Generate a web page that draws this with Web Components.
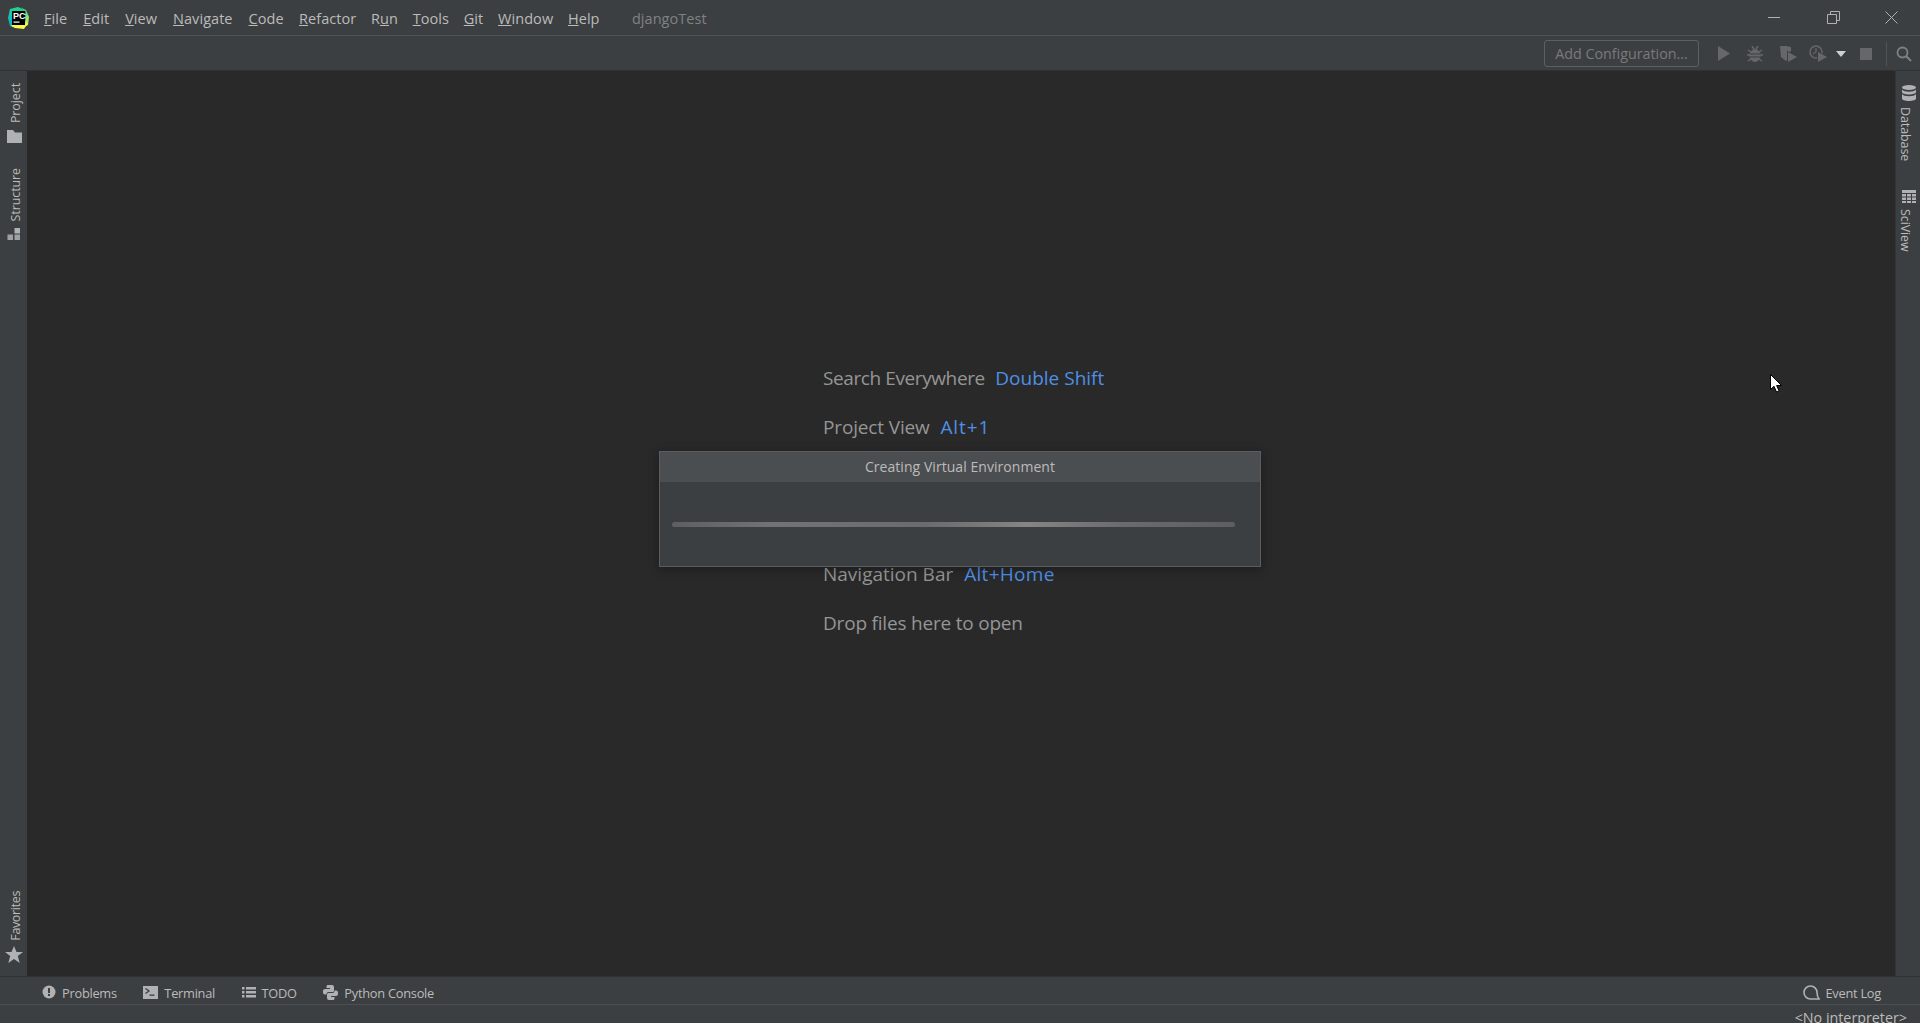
<!DOCTYPE html>
<html><head><meta charset="utf-8"><title>djangoTest</title>
<style>
html,body{margin:0;height:100%;overflow:hidden;background:#3c3f41}
</style></head><body>
<ide-app></ide-app>
<script>
const FONT='"Open Sans","Noto Sans",sans-serif';
function def(name,html,init){
  customElements.define(name,class extends HTMLElement{
    constructor(){super();const r=this.attachShadow({mode:'open'});r.innerHTML=html;}
    connectedCallback(){ if(init) init.call(this,this.shadowRoot); }
  });
}
const ICON={
 folder:'<svg width="15" height="13" viewBox="0 0 15 13"><path fill="#afb1b3" d="M0 0h6l2 2.5h7V13H0z"/></svg>',
 structure:'<svg width="14" height="12" viewBox="0 0 14 12"><g fill="#afb1b3"><rect x="7.5" y="0" width="5.5" height="5.5"/><rect x="0.5" y="6.5" width="5.5" height="5.5" opacity=".85"/><rect x="7.5" y="6.5" width="5.5" height="5.5" opacity=".85"/></g></svg>',
 star:'<svg width="18" height="17" viewBox="0 0 18 17"><path fill="#afb1b3" d="M9 0l2.5 6H18l-5.2 4.1L14.7 17 9 13l-5.7 4 1.9-6.9L0 6h6.5z"/></svg>',
 db:'<svg width="14" height="16" viewBox="0 0 14 16"><g fill="#afb1b3"><ellipse cx="7" cy="2.5" rx="7" ry="2.5"/><path d="M0 4.5c1 1.6 3.6 2.2 7 2.2s6-.6 7-2.2v2.6c0 1.4-3 2.5-7 2.5S0 8.500 0 7.100z"/><path d="M0 9c1 1.600 3.600 2.200 7 2.200S13 10.600 14 9v4.500C14 15 11 16 7 16S0 15 0 13.500z"/></g></svg>',
 sci:'<svg width="14" height="13" viewBox="0 0 14 13"><g fill="#afb1b3"><path d="M0 0h14v3H0zM0 4h4v2.500H0zM5 4h4v2.500H5zM10 4h4v2.500h-4zM0 7.500h4V10H0zM5 7.500h4V10H5zM10 7.500h4V10h-4zM0 11h4v2H0zM5 11h4v2H5zM10 11h4v2h-4z"/></g></svg>',
 problems:'<svg width="14" height="14" viewBox="0 0 14 14"><circle cx="7" cy="7" r="6.500" fill="#afb1b3"/><rect x="6" y="3" width="2" height="5" fill="#3c3f41"/><rect x="6" y="9" width="2" height="2" fill="#3c3f41"/></svg>',
 terminal:'<svg width="15" height="13" viewBox="0 0 15 13"><rect width="15" height="13" fill="#afb1b3"/><path d="M2.500 2.500l3.500 2.500-3.500 2.500" fill="none" stroke="#3c3f41" stroke-width="1.300"/><rect x="6.500" y="8.500" width="5" height="1.300" fill="#3c3f41"/></svg>',
 todo:'<svg width="14" height="11" viewBox="0 0 14 11"><g fill="#afb1b3"><rect y="0" width="2.500" height="2.500"/><rect y="4" width="2.500" height="2.500"/><rect y="8" width="2.500" height="2.500"/><rect x="4" y="0" width="10" height="2.500"/><rect x="4" y="4" width="10" height="2.500"/><rect x="4" y="8" width="10" height="2.500"/></g></svg>',
 python:'<svg width="15" height="15" viewBox="0 0 15 15"><g fill="#afb1b3"><path d="M5 0h4a2 2 0 0 1 2 2v3.500a1.500 1.500 0 0 1-1.500 1.500h-4A2 2 0 0 0 3.500 9v.5H2A2 2 0 0 1 0 7.500V6a2 2 0 0 1 2-2h5V3H3.500V1.500C3.500 .6 4 0 5 0z"/><path d="M10 15H6a2 2 0 0 1-2-2V9.500A1.500 1.500 0 0 1 5.500 8h4a2 2 0 0 0 2-2v-.5H13a2 2 0 0 1 2 2V9a2 2 0 0 1-2 2H8v1h3.500v1.500c0 .9-.5 1.500-1.500 1.500z"/></g></svg>',
 event:'<svg width="17" height="15" viewBox="0 0 17 15"><path fill="none" stroke="#afb1b3" stroke-width="1.600" d="M16 14H7.500a6.500 6.500 0 1 1 6.500-6.500c0 2.500.6 4.500 2 6.500z"/></svg>'
};
const SVGBLOCK='svg{display:block}span[slot]{display:block}';
def('ide-logo',`<style>:host{display:block;width:21px;height:22px}svg{display:block}text{font:700 9px "Liberation Sans",sans-serif;fill:#fff}</style>
<svg width="21" height="22" viewBox="0 0 21 22"><defs><linearGradient id="g1" x1="0" y1="0" x2="0" y2="1"><stop offset="0" stop-color="#21d789"/><stop offset="1" stop-color="#07a8d8"/></linearGradient><linearGradient id="g2" x1="0" y1="0" x2="0" y2="1"><stop offset="0" stop-color="#21d789"/><stop offset="1" stop-color="#fcf84a"/></linearGradient></defs>
<path fill="url(#g1)" d="M2 2l8-2 6 3 3 6-2 9-8 3-7-2-2-8z"/><path fill="url(#g2)" d="M12 0l6 3 3 7-1 8-6 3 4-8V5z"/><path fill="#fcf84a" d="M3 19l4 2 9 1 4-6-4 1H5z"/><rect x="4" y="4" width="13" height="14" fill="#000"/><text x="5" y="12">PC</text><rect x="5.500" y="14.500" width="6" height="1.200" fill="#fff"/></svg>`);
def('win-controls',`<style>:host{display:flex;align-items:center;height:35px;padding-right:22px}svg{display:block}</style>
<svg width="12" height="2" viewBox="0 0 12 2"><rect width="12" height="1" fill="#afb1b3"/></svg>
<svg style="margin-left:47px" width="13" height="13" viewBox="0 0 13 13"><path fill="none" stroke="#afb1b3" d="M3.500 3V.5h9v9H10M.5 3.500h9v9h-9z"/></svg>
<svg style="margin-left:45px" width="13" height="13" viewBox="0 0 13 13"><path fill="none" stroke="#afb1b3" d="M.5.5l12 12M12.500.5l-12 12"/></svg>`);
def('menu-item',`<style>:host{display:block;font-size:14.5px;letter-spacing:.05px;color:#bbb;padding:1px 8px 0}</style><slot></slot>`);
def('ide-titlebar',`<style>:host{display:flex;align-items:center;height:35px;border-bottom:1px solid #515456;flex:none;font-family:${FONT}}
ide-logo{margin-left:8px;margin-right:7px}
.title{margin-left:25px;padding-top:1px;font-size:14.5px;letter-spacing:.05px;color:#7f8285}
win-controls{margin-left:auto}
nav{display:flex}
menu-item:nth-child(n+6){padding-left:7.4px;padding-right:7.4px}</style>
<ide-logo></ide-logo>
<nav>
<menu-item><u>F</u>ile</menu-item><menu-item><u>E</u>dit</menu-item><menu-item><u>V</u>iew</menu-item><menu-item><u>N</u>avigate</menu-item><menu-item><u>C</u>ode</menu-item><menu-item><u>R</u>efactor</menu-item><menu-item>R<u>u</u>n</menu-item><menu-item><u>T</u>ools</menu-item><menu-item><u>G</u>it</menu-item><menu-item><u>W</u>indow</menu-item><menu-item><u>H</u>elp</menu-item>
</nav><span class="title">djangoTest</span><win-controls></win-controls>`);
def('ide-toolbar',`<style>:host{display:flex;align-items:center;justify-content:flex-end;height:33px;padding-top:1px;flex:none;font-family:${FONT};border-bottom:1px solid #2f3132;padding-right:8px}
.cfg{box-sizing:border-box;width:155px;height:27px;border:1px solid #5e6060;border-radius:3px;font-size:14.300px;color:#787a7c;display:flex;align-items:center;justify-content:center;margin-right:19px}
.row{display:flex;align-items:center}
.sep{width:1px;height:24px;background:#515456;margin:0 9px 0 14px}
svg{display:block}</style>
<div class="cfg">Add Configuration...</div>
<div class="row">
<svg width="12" height="15" viewBox="0 0 12 15"><path fill="#656769" d="M0 0l12 7.500L0 15z"/></svg>
<svg style="margin-left:17px" width="16" height="16" viewBox="0 0 16 16"><g fill="#656769"><ellipse cx="8" cy="9.500" rx="5.500" ry="6.500"/><path d="M1 4l3 2M15 4l-3 2M0 9h3M16 9h-3M1 15l3-2M15 15l-3-2M5 0l2 3M11 0L9 3" stroke="#656769" stroke-width="1.500"/></g><path d="M3 8h10M3 11h10" stroke="#3c3f41"/></svg>
<svg style="margin-left:16px" width="18" height="17" viewBox="0 0 18 17"><path fill="#656769" d="M1 1h6l5 1v4l-3 2v6l-2 2-5-4z"/><path fill="#3c3f41" d="M8 5.500l10 6-10 6z"/><path fill="#656769" d="M9 7l9 5-9 5z"/></svg>
<svg style="margin-left:12px" width="18" height="17" viewBox="0 0 18 17"><circle cx="7" cy="7" r="6" fill="none" stroke="#656769" stroke-width="1.500"/><path d="M7 3v4l-3 2" fill="none" stroke="#656769" stroke-width="1.300"/><path fill="#3c3f41" d="M8 5.500l10 6-10 6z"/><path fill="#656769" d="M9 7l9 5-9 5z"/></svg>
<svg style="margin-left:9px" width="10" height="6" viewBox="0 0 10 6"><path fill="#cfd0d1" d="M0 0h10L5 6z"/></svg>
<svg style="margin-left:14px" width="12" height="12" viewBox="0 0 12 12"><rect width="12" height="12" fill="#656769"/></svg>
<div class="sep"></div>
<svg width="16" height="16" viewBox="0 0 16 16"><circle cx="6.500" cy="6.500" r="5" fill="none" stroke="#7f8284" stroke-width="1.800"/><path d="M10 10l5 5" stroke="#7f8284" stroke-width="2"/></svg>
</div>`);
def('stripe-button',`<style>:host{display:flex;flex-direction:column;align-items:center;font-size:12.500px;letter-spacing:var(--ls,-.1px);color:#bbb;line-height:16px}
.t{writing-mode:vertical-rl}
:host([side=left]) .t{transform:translateX(2px) rotate(180deg)}
:host([side=right]) .t{transform:translateX(-4px)}
.i{display:block}
:host([side=left]) .i{margin-top:var(--im,7px)}
:host([side=right]) .i{margin-bottom:6px}
:host([side=right]){flex-direction:column-reverse}
</style><span class="t"><slot></slot></span><span class="i"><slot name="icon"></slot></span>`);
def('left-stripe',`<style>${SVGBLOCK}:host{display:flex;flex-direction:column;width:27px;box-sizing:border-box;flex:none;font-family:${FONT};padding:12px 0 13px 1px;align-items:center}
.g{display:flex;flex-direction:column;gap:24.5px}
.end{margin-top:auto;--ls:-.35px;--im:5px}</style>
<div class="g"><stripe-button side="left"><span slot="icon">${ICON.folder}</span>Project</stripe-button>
<stripe-button side="left"><span slot="icon">${ICON.structure}</span>Structure</stripe-button></div>
<stripe-button class="end" side="left"><span slot="icon">${ICON.star}</span>Favorites</stripe-button>`);
def('right-stripe',`<style>${SVGBLOCK}:host{display:flex;flex-direction:column;width:25px;box-sizing:border-box;flex:none;font-family:${FONT};padding:14px 0 0 1px;align-items:center;gap:29px;border-left:1px solid #333536}</style>
<stripe-button side="right"><span slot="icon">${ICON.db}</span>Database</stripe-button>
<stripe-button side="right"><span slot="icon">${ICON.sci}</span>SciView</stripe-button>`);
def('hint-row',`<style>:host{display:block;height:49px;line-height:49px;font-size:19px;letter-spacing:var(--ls,-.15px);color:#959595;white-space:nowrap}
::slotted(b){font-weight:400;color:#4f8fe6;margin-left:6px;letter-spacing:var(--kls,0)}</style><slot></slot>`);
def('welcome-hints',`<style>:host{display:flex;flex-direction:column;font-family:${FONT};position:absolute;left:823px;top:354px}</style><slot></slot>`);
def('progress-dialog',`<style>:host{position:absolute;left:659px;top:451px;width:602px;height:116px;box-sizing:border-box;border:1px solid #5b5e60;background:#3c3f41;font-family:${FONT};box-shadow:0 2px 10px rgba(0,0,0,.35);display:flex;flex-direction:column}
.h{height:30px;line-height:30px;background:#4b4e51;color:#bbb;text-align:center;font-size:14px;letter-spacing:.05px;flex:none}
.b{padding:40px 25px 0 12px}
.p{height:5px;border-radius:3px;background:linear-gradient(90deg,#5d5f61 0,#727375 18%,#6a6b6d 45%,#858585 63%,#6a6b6d 80%,#5c5e60 100%)}</style>
<div class="h">Creating Virtual Environment</div><div class="b"><div class="p"></div></div>`);
def('mouse-cursor',`<style>:host{position:absolute;left:1770px;top:374px;width:12px;height:19px}svg{display:block}</style>
<svg width="12" height="19" viewBox="0 0 12 19"><path fill="#fff" stroke="#000" d="M.5.5v15l3.500-3.200 2.500 5.700 2.600-1.100-2.500-5.400h4.900z"/></svg>`);
def('editor-area',`<style>:host{display:block;flex:1;min-width:0;background:#292929}</style>`);
def('tool-tab',`<style>:host{display:flex;align-items:center;gap:6px;font-size:12.800px;letter-spacing:-.25px;color:#bbb;white-space:nowrap}
.l{position:relative;top:1px}</style><slot name="icon"></slot><span class="l"><slot></slot></span>`);
def('bottom-bar',`<style>${SVGBLOCK}:host{display:flex;align-items:center;flex:none;font-family:${FONT};border-top:1px solid #2f3132;border-bottom:1px solid #4d5052;box-sizing:border-box;height:29px;padding:3px 39px 0 42px;gap:26.500px}
.end{margin-left:auto}</style>
<tool-tab><span slot="icon">${ICON.problems}</span>Problems</tool-tab>
<tool-tab><span slot="icon">${ICON.terminal}</span>Terminal</tool-tab>
<tool-tab><span slot="icon">${ICON.todo}</span>TODO</tool-tab>
<tool-tab><span slot="icon">${ICON.python}</span>Python Console</tool-tab>
<tool-tab class="end"><span slot="icon">${ICON.event}</span>Event Log</tool-tab>`);
def('status-bar',`<style>:host{display:flex;justify-content:flex-end;flex:none;height:18px;overflow:hidden;font-family:${FONT};font-size:14.300px;color:#bbb;padding-right:13px;line-height:18px;padding-top:4px;box-sizing:border-box}</style><span>&lt;No interpreter&gt;</span>`);
def('ide-app',`<style>:host{display:flex;flex-direction:column;height:1023px;width:1920px;position:relative;background:#3c3f41;overflow:hidden}
.mid{display:flex;flex:1;min-height:0}</style>
<ide-titlebar></ide-titlebar><ide-toolbar></ide-toolbar>
<div class="mid"><left-stripe></left-stripe><editor-area></editor-area><right-stripe></right-stripe></div>
<bottom-bar></bottom-bar><status-bar></status-bar>
<welcome-hints>
<hint-row style="--ls:-.4px">Search Everywhere <b>Double Shift</b></hint-row>
<hint-row style="--kls:.9px">Project View <b>Alt+1</b></hint-row>
<hint-row></hint-row><hint-row></hint-row>
<hint-row style="--ls:0px;--kls:.3px">Navigation Bar <b>Alt+Home</b></hint-row>
<hint-row style="--ls:-.2px">Drop files here to open</hint-row>
</welcome-hints>
<progress-dialog></progress-dialog>
<mouse-cursor></mouse-cursor>`);
</script>
</body></html>
